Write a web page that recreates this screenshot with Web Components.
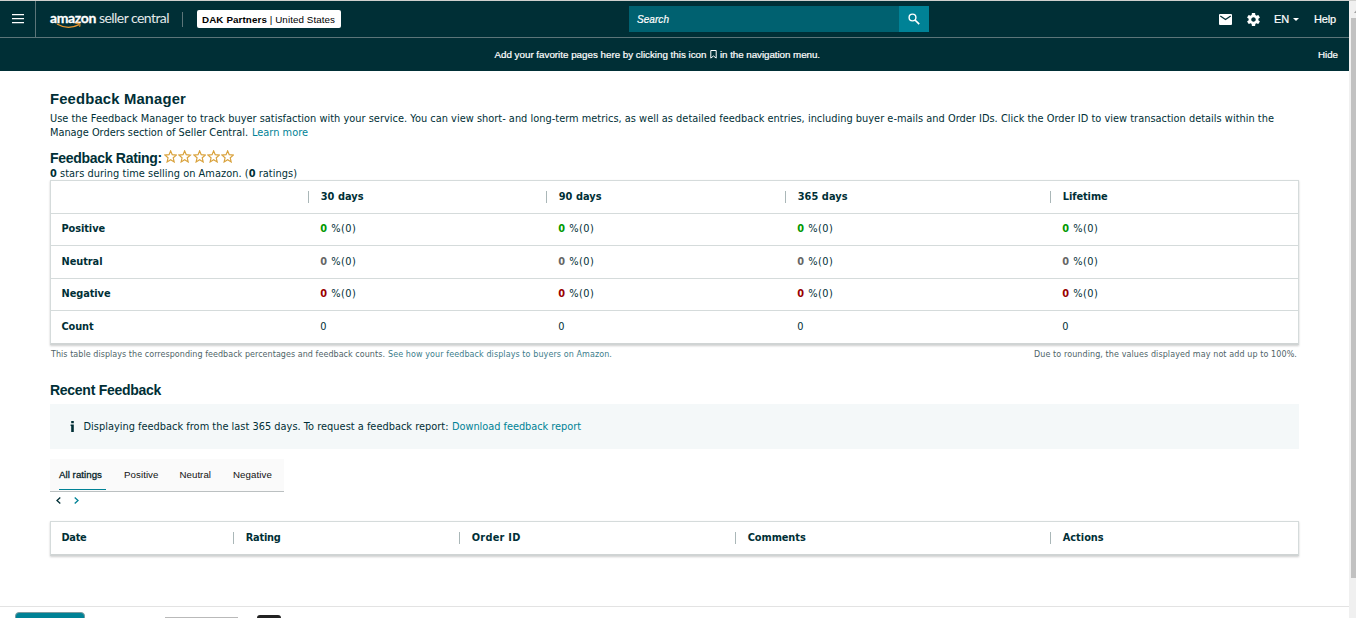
<!DOCTYPE html>
<html lang="en">
<head>
<meta charset="utf-8">
<title>Feedback Manager</title>
<style>
  html, body { margin: 0; height: 618px; overflow: hidden; background: #fff; }
  body {
    display: flex;
    color: #002f36;
    font-family: "DejaVu Sans", Verdana, sans-serif;
    font-size: 9.8px;
  }
</style>
</head>
<body>
<feedback-app></feedback-app>
<scroll-track></scroll-track>

<script>
"use strict";

function define(name, html, base) {
  window.customElements.define(name, class extends (base || HTMLElement) {
    constructor() {
      super();
      this.attachShadow({mode: "open"}).innerHTML = html;
    }
  });
}

// A single line of text. |fit| is its width in pixels; the letters are
// tracked in or out until the line has that width.
class FitText extends HTMLElement {
  set fit(w) { this.setAttribute("fit", w); }
  get fit() { return this.getAttribute("fit"); }

  connectedCallback() {
    var target = parseFloat(this.fit);
    if (!target)
      return;
    var width = this.getBoundingClientRect().width;
    this.style.letterSpacing = ((target - width) / this.textContent.length) + "px";
  }
}

define("fit-text", `
  <style>
    :host { display: inline-block; white-space: nowrap; }
  </style>
  <slot></slot>
`, FitText);

define("seller-logo", `
  <style>
    :host { display: block; position: relative; width: 120px; height: 22px; color: #fff; }
    .words { display: flex; gap: 3px; font: 14px/20px Lato, "Open Sans", sans-serif; }
    .amazon { font-weight: 700; -webkit-text-stroke: .3px #fff; }
    .rest { color: #e3e9ea; }
    svg { position: absolute; left: 6px; top: 14px; }
  </style>
  <div class="words">
    <fit-text class="amazon" fit="46">amazon</fit-text>
    <fit-text class="rest" fit="70">seller central</fit-text>
  </div>
  <svg width="26" height="8" viewBox="0 0 26 8" fill="none" stroke="#f29a2e" stroke-width="1.3">
    <path d="M1 2 Q12 8.5 23 2.6"/>
    <path d="M19.5 1.3 Q25.5 .2 23.6 4.7" stroke-width="1.1"/>
  </svg>
`);

define("top-bar", `
  <style>
    :host {
      display: flex; align-items: center; height: 36px;
      background: #002f36; border-top: 1px solid #d0d0ce; border-bottom: 1px solid #5c7579;
      color: #fff; font: 11px "Liberation Sans", Arial, sans-serif;
    }
    .menu { display: grid; place-items: center; width: 35px; height: 36px; border-right: 1px solid #5c7579; }
    seller-logo { margin: -1px 0 0 14px; }
    .divider { width: 1px; height: 15px; margin-left: 12px; background: #5c7579; }
    .account {
      display: flex; align-items: center; box-sizing: border-box;
      width: 144px; height: 18px; padding-left: 5px; margin-left: 14px;
      border-radius: 2px; background: #fff; color: #000; font-size: 9.8px;
    }
    .search { display: flex; width: 300px; height: 26px; margin-left: 288px; background: #006170; }
    .search fit-text { flex: none; margin-left: 8px; line-height: 27px; font-size: 10px; font-style: italic; -webkit-text-stroke: .2px #fff; }
    .go { display: grid; place-items: center; width: 30px; margin-left: auto; background: #008296; }
    .tools { display: flex; align-items: center; margin-left: auto; padding-right: 13px; -webkit-text-stroke: .2px #fff; }
    svg { display: block; }
  </style>
  <div class="menu">
    <svg width="12" height="10" fill="#fff"><path d="M0 0h12v1.3H0zM0 4h12v1.3H0zM0 8h12v1.3H0z"/></svg>
  </div>
  <seller-logo></seller-logo>
  <div class="divider"></div>
  <div class="account"><fit-text fit="65"><b>DAK Partners</b></fit-text><fit-text fit="68">&nbsp;| United States</fit-text></div>
  <div class="search">
    <fit-text fit="32">Search</fit-text>
    <div class="go">
      <svg width="12" height="12" viewBox="0 0 12 12" fill="none" stroke="#fff" stroke-width="1.4"><circle cx="4.5" cy="4.5" r="3.4"/><path d="M7 7l4.2 4.2" stroke-width="1.7"/></svg>
    </div>
  </div>
  <div class="tools">
    <svg width="13" height="11" viewBox="0 0 13 11"><rect width="13" height="11" rx="1" fill="#fff"/><path d="M1.3 1.9l5.2 3.7 5.2-3.7" fill="none" stroke="#002f36" stroke-width="1.2"/></svg>
    <svg width="13" height="13" viewBox="2 2 20 20" fill="#fff" style="margin-left:15px"><path d="M19.43 12.98c.04-.32.07-.64.07-.98s-.03-.66-.07-.98l2.11-1.65c.19-.15.24-.42.12-.64l-2-3.46c-.12-.22-.39-.3-.61-.22l-2.49 1c-.52-.4-1.08-.73-1.69-.98l-.38-2.65C14.46 2.18 14.25 2 14 2h-4c-.25 0-.46.18-.49.42l-.38 2.65c-.61.25-1.17.59-1.69.98l-2.49-1c-.23-.09-.49 0-.61.22l-2 3.46c-.13.22-.07.49.12.64l2.11 1.65c-.04.32-.07.65-.07.98s.03.66.07.98l-2.11 1.65c-.19.15-.24.42-.12.64l2 3.46c.12.22.39.3.61.22l2.49-1c.52.4 1.08.73 1.69.98l.38 2.65c.03.24.24.42.49.42h4c.25 0 .46-.18.49-.42l.38-2.65c.61-.25 1.17-.59 1.69-.98l2.49 1c.23.09.49 0 .61-.22l2-3.46c.12-.22.07-.49-.12-.64l-2.11-1.65zM12 15.5c-1.93 0-3.5-1.57-3.5-3.5s1.57-3.5 3.5-3.5 3.5 1.57 3.5 3.5-1.57 3.5-3.5 3.5z"/></svg>
    <fit-text fit="15" style="margin-left:14px">EN</fit-text>
    <svg width="6" height="3" fill="#fff" style="margin:1px 15px 0 4px"><path d="M0 0h6L3 3z"/></svg>
    <fit-text fit="22">Help</fit-text>
  </div>
`);

define("favorites-bar", `
  <style>
    :host {
      display: flex; align-items: center; height: 33px; padding: 0 11px 1px 494.5px; box-sizing: border-box;
      background: #002f36; color: #fff; font: 9.8px "Liberation Sans", Arial, sans-serif;
      -webkit-text-stroke: .2px #fff;
    }
    svg { margin: 0 3.500px 0 3px; }
    .hide { margin-left: auto; }
  </style>
  <fit-text fit="212">Add your favorite pages here by clicking this icon</fit-text>
  <svg width="7" height="9" viewBox="0 0 7 9" fill="none" stroke="#fff"><path d="M.8 .5h5.4v7.6L3.5 6 .8 8.100z"/></svg>
  <fit-text fit="100">in the navigation menu.</fit-text>
  <fit-text class="hide" fit="20">Hide</fit-text>
`);

define("section-title", `
  <style>
    :host { display: block; font: bold 14px/18px "Liberation Sans", Arial, sans-serif; }
    :host([large]) { font-size: 14.8px; }
  </style>
  <slot></slot>
`);

define("text-link", `
  <style>
    :host { color: #008296; }
  </style>
  <slot></slot>
`);

// Row of five outlined stars.
define("star-rating", `
  <style>
    :host { display: flex; gap: 1px; padding: 1px 0 0; }
  </style>
  ${`<svg width="13.3" height="13" viewBox="0 0 13 13" fill="none" stroke="#d9a23c" stroke-width="1.2"><path d="M6.500 .9L8.100 4.700 12.200 5.100 9.100 7.800 10 11.900 6.500 9.700 3 11.900 3.900 7.800 .8 5.100 4.900 4.700z"/></svg>`.repeat(5)}
`);

define("metric-value", `
  <style>
    :host { display: block; }
    :host([tone="positive"]) { --tone: #090; }
    :host([tone="neutral"]) { --tone: #666; }
    :host([tone="negative"]) { --tone: #900; }
    b { color: var(--tone); }
  </style>
  <fit-text fit="36"><b>0</b> %(0)</fit-text>
`);

// Bordered table; the header cells after the first one have a short rule.
class DataTable extends HTMLElement {
  connectedCallback() {
    this.shadowRoot.getElementById("table").style.gridTemplateColumns = this.getAttribute("columns");
  }
}

define("data-table", `
  <style>
    :host { display: block; line-height: 12px; }
    #table {
      display: grid; box-sizing: border-box; width: 1249px;
      border: 1px solid #d5dbdb; border-bottom: 2px solid #d0d4d4;
      box-shadow: 0 1px 2px rgba(0, 0, 0, .2);
      grid-template-rows: var(--rows, 32px);
    }
  </style>
  <div id="table"><slot></slot></div>
`, DataTable);

define("head-cell", `
  <style>
    :host { display: flex; align-items: center; font-weight: bold; border-bottom: var(--line, 0) solid #d5dbdb; }
    i { width: 1px; height: 12px; margin-right: 11.700px; background: #aab7b8; }
    :host([first]) i { width: 0; margin-right: 10.500px; }
    ::slotted(*) { margin-bottom: 1px; }
  </style>
  <i></i><slot></slot>
`);

define("body-cell", `
  <style>
    :host { display: flex; align-items: center; padding: 0 0 1px 12.300px; border-bottom: 1px solid #d5dbdb; }
    :host([name]) { font-weight: bold; padding-left: 10.500px; }
    :host([last]) { border-bottom: 0; }
  </style>
  <slot></slot>
`);

define("metrics-table", `
  <style>
    :host { display: block; }
    data-table { --rows: 33px 32px 33px 32px 32px; --line: 1px; }
  </style>
  <data-table columns="257px 238px 239px 265px 1fr">
    <head-cell first></head-cell>
    <head-cell><fit-text fit="43">30 days</fit-text></head-cell>
    <head-cell><fit-text fit="43">90 days</fit-text></head-cell>
    <head-cell><fit-text fit="50">365 days</fit-text></head-cell>
    <head-cell><fit-text fit="45">Lifetime</fit-text></head-cell>
    ${[["Positive", 43.5], ["Neutral", 41], ["Negative", 49]].map(row => `
      <body-cell name><fit-text fit="${row[1]}">${row[0]}</fit-text></body-cell>
      ${`<body-cell><metric-value tone="${row[0].toLowerCase()}"></metric-value></body-cell>`.repeat(4)}
    `).join("")}
    <body-cell name last><fit-text fit="32">Count</fit-text></body-cell>
    ${`<body-cell last>0</body-cell>`.repeat(4)}
  </data-table>
`);

define("info-banner", `
  <style>
    :host {
      display: flex; align-items: center; box-sizing: border-box;
      width: 1249px; height: 45px; padding-left: 20px; background: #f4f8f9;
    }
    svg { margin: -1px 8.500px 0 0; }
  </style>
  <svg width="5" height="11" fill="#002f36"><path d="M1.200 0h2.600v2.200H1.200zM.6 3.600h3.200V11H1.200V5H.6z"/></svg>
  <slot></slot>
`);

define("rating-tabs", `
  <style>
    :host {
      display: flex; align-items: stretch; gap: 18px; box-sizing: border-box;
      width: 234px; height: 33px; padding-left: 9px;
      background: #fafafa; border-bottom: 1px solid #bbc0c1;
      font: 9.7px/32px "Liberation Sans", Arial, sans-serif; color: #111;
    }
    .active { width: 47px; height: 30px; border-bottom: 1px solid #008296; -webkit-text-stroke: .3px #002f36; }
  </style>
  <div class="active"><fit-text fit="43">All ratings</fit-text></div>
  <fit-text fit="34.500">Positive</fit-text>
  <fit-text fit="31.500" style="margin-left:3px">Neutral</fit-text>
  <fit-text fit="39" style="margin-left:4px">Negative</fit-text>
`);

define("page-arrows", `
  <style>
    :host { display: flex; gap: 13px; padding-left: 6px; }
  </style>
  <svg width="5" height="7" fill="none" stroke="#002f36" stroke-width="1.3"><path d="M4.300 .5L1 3.500l3.300 3"/></svg>
  <svg width="5" height="7" fill="none" stroke="#008296" stroke-width="1.300"><path d="M.7 .5L4 3.500l-3.300 3"/></svg>
`);

// Top edge of the footer controls, cut off by the window.
define("page-footer", `
  <style>
    :host { display: flex; height: 11px; padding-left: 15px; border-top: 1px solid #e3e3e3; overflow: hidden; }
    .button { width: 70px; height: 20px; margin-top: 5px; box-sizing: border-box; border: 1px solid #7d9ba0; border-radius: 4px; background: #008296; }
    .select { width: 73px; height: 20px; margin: 10px 0 0 80px; background: #b9b9b9; }
    .badge { width: 24px; height: 20px; margin: 8px 0 0 19px; border-radius: 3px; background: #222; }
  </style>
  <div class="button"></div>
  <div class="select"></div>
  <div class="badge"></div>
`);

define("scroll-track", `
  <style>
    :host { display: block; box-sizing: border-box; width: 7px; height: 618px; padding: 11px 0 0 2px; background: #f0f0f0; border-top: 1px solid #d0d0ce; }
    svg { display: block; margin: -2px 0 0 3px; }
    .thumb { width: 5px; height: 560px; margin-top: 5px; background: #c1c1c1; }
  </style>
  <svg width="2" height="3" fill="#a0a0a0"><path d="M0 3L2 .5V3z"/></svg>
  <div class="thumb"></div>
`);

define("feedback-app", `
  <style>
    :host { display: flex; flex-direction: column; width: 1349px; height: 618px; }
    main { display: flex; flex-direction: column; flex: 1; padding: 19px 0 0 50px; }
    .intro { line-height: 14px; margin-top: 4px; }
    .intro div, .stars { display: flex; gap: 4px; }
    .rating { display: flex; gap: 2px; margin-top: 9px; height: 18px; }
    .stars { height: 13px; line-height: 14px; }
    .note { display: flex; justify-content: space-between; width: 1246px; margin: 4px 0 0 1px; font-size: 8px; line-height: 12px; color: #4f6468; }
    .note div { display: flex; gap: 3px; }
    .note text-link { color: #3d7d8b; }
    .recent { margin: 20px 0 5px; }
    rating-tabs { margin-top: 10px; }
    page-arrows { margin: 5px 0 17px; }
    .list { --rows: 32px; }
    page-footer { flex: none; }
  </style>
  <top-bar></top-bar>
  <favorites-bar></favorites-bar>
  <main>
    <section-title large><fit-text fit="136">Feedback Manager</fit-text></section-title>
    <div class="intro">
      <div><fit-text fit="1224">Use the Feedback Manager to track buyer satisfaction with your service. You can view short- and long-term metrics, as well as detailed feedback entries, including buyer e-mails and Order IDs. Click the Order ID to view transaction details within the</fit-text></div>
      <div><fit-text fit="198">Manage Orders section of Seller Central.</fit-text><text-link><fit-text fit="56">Learn more</fit-text></text-link></div>
    </div>
    <div class="rating">
      <section-title><fit-text fit="112">Feedback Rating:</fit-text></section-title>
      <star-rating></star-rating>
    </div>
    <div class="stars"><fit-text fit="247"><b>0</b> stars during time selling on Amazon. (<b>0</b> ratings)</fit-text></div>
    <metrics-table></metrics-table>
    <div class="note">
      <div><fit-text fit="334">This table displays the corresponding feedback percentages and feedback counts.</fit-text><text-link><fit-text fit="224">See how your feedback displays to buyers on Amazon.</fit-text></text-link></div>
      <fit-text fit="263">Due to rounding, the values displayed may not add up to 100%.</fit-text>
    </div>
    <section-title class="recent"><fit-text fit="111">Recent Feedback</fit-text></section-title>
    <info-banner>
      <fit-text fit="365">Displaying feedback from the last 365 days. To request a feedback report:</fit-text>
      <text-link style="margin-left:3.500px"><fit-text fit="129">Download feedback report</fit-text></text-link>
    </info-banner>
    <rating-tabs></rating-tabs>
    <page-arrows></page-arrows>
    <data-table class="list" columns="182px 226px 276px 315px 1fr">
      <head-cell first><fit-text fit="25">Date</fit-text></head-cell>
      <head-cell><fit-text fit="35">Rating</fit-text></head-cell>
      <head-cell><fit-text fit="49">Order ID</fit-text></head-cell>
      <head-cell><fit-text fit="58">Comments</fit-text></head-cell>
      <head-cell><fit-text fit="41">Actions</fit-text></head-cell>
    </data-table>
  </main>
  <page-footer></page-footer>
`);
</script>
</body>
</html>
